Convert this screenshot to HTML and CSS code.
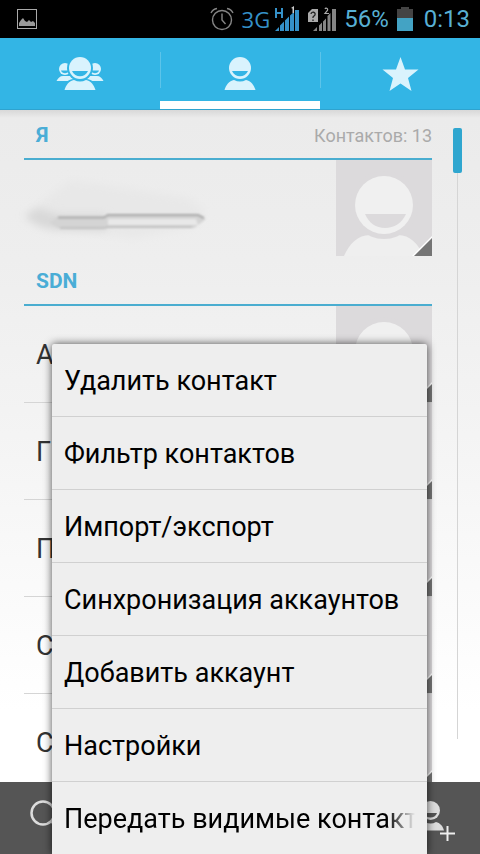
FILE: index.html
```html
<!DOCTYPE html>
<html lang="ru">
<head>
<meta charset="utf-8">
<meta name="viewport" content="width=device-width, initial-scale=1">
<title>Контакты</title>
<link rel="stylesheet" href="styles.css">
</head>
<body>
<svg class="defs" aria-hidden="true">
  <symbol id="avatar" viewBox="0 0 96 96">
    <rect width="96" height="96" fill="#dcdadc"/>
    <path d="M8 96C13 84 22 75 34 75H62C74 75 82 84 88 96Z" fill="#efefef"/>
    <circle cx="48" cy="45" r="34" fill="#dcdadc"/>
    <circle cx="48" cy="45" r="29" fill="#f0f0f0"/>
    <path d="M29 54H70C66 63 58 68 49 68S33 63 29 54Z" fill="#dcdadc"/>
    <path d="M76 96L96 76V96Z" fill="#fff"/>
    <path d="M78 96L96 78V96Z" fill="#757575"/>
  </symbol>
</svg>
<div class="app">
  <header class="status">
    <svg class="status-picture" width="20" height="20" viewBox="0 0 20 20"><rect x=".5" y=".5" width="19" height="19" fill="none" stroke="#aaa"/><path d="M2 17V14L4 11 6 9 8 12 10 13 12 11 14 13 16 12 18 14V17Z" fill="#999"/></svg>
    <svg width="24" height="24" viewBox="0 0 24 24" fill="none" stroke="#858585" stroke-width="1.4"><circle cx="12" cy="13" r="9.5"/><path d="M12 6.500V13L15.500 17M1 6C2 4 4 2 7 1.500M23 6C22 4 20 2 17 1.500"/></svg>
    <span class="network">3G</span>
    <svg class="signal" width="26" height="26" viewBox="0 0 26 26" fill="#3591c8"><path d="M1 25L5 21V25ZM6 19.500L10 15.500V25H6ZM11 14.500L15 10.500V25H11ZM16 9.500L20 6V25H16ZM21 4H25V25H21Z"/><path d="M1 2H3V6H7V2H9V12H7V8H3V12H1Z"/><path d="M17 2L20 0V7H18.500V2.500Z" fill="#ccc"/></svg>
    <svg width="28" height="26" viewBox="0 0 28 26" fill="#858585"><path d="M5 25L9 21V25ZM11 19.500L14 16.500V25H11ZM15 15.500L18 12.500V25H15ZM19.500 10L22.500 7V25H19.500ZM24 3H28V25H24Z"/><path d="M4 3H10V16H0V7Z" fill="#aaa"/><path d="M3 8C3.500 5 8 6 7 9L5 11V12M5 13.500V15" fill="none" stroke="#222" stroke-width="1.300"/><path d="M17 3C18 1 21 3 19 5L17 7.500H21" fill="none" stroke="#aaa" stroke-width="1.200"/></svg>
    <span class="battery-text">56%</span>
    <svg class="battery" width="16" height="24" viewBox="0 0 16 24"><path d="M4 0H12V2H16V11H0V2H4Z" fill="#444"/><path d="M0 11H16V24H0Z" fill="#43a3c4"/></svg>
    <time>0:13</time>
  </header>

  <nav class="tabs" role="tablist">
    <button class="tab" role="tab" aria-label="Группы">
      <svg width="48" height="36" viewBox="0 0 48 36" fill="#d9f3fd"><circle cx="9" cy="13" r="6"/><circle cx="39" cy="13" r="6"/><path d="M.5 25C2 22 4 20 7 20H41C44 20 46 22 47.500 25Z"/><path d="M5 14.500H13C12 18 6 18 5 14.500ZM35 14.500H43C42 18 36 18 35 14.500Z" fill="#33b5e5"/><circle cx="24" cy="12" r="13" fill="#33b5e5"/><path d="M6 35C8 28 11 23 18 23H30C37 23 40 28 42 35Z" fill="#33b5e5"/><path d="M8.500 34C10 29 13 25 18 24Q24 27 30 24C35 25 38 29 39.500 34Z"/><circle cx="24" cy="12" r="11"/><path d="M16 15H32C29 22 19 22 16 15Z" fill="#33b5e5"/></svg>
    </button>
    <button class="tab selected" role="tab" aria-selected="true" aria-label="Контакты">
      <svg width="36" height="36" viewBox="0 0 36 36" fill="#d9f3fd"><path d="M2.500 34C4 29 7 25 12 24Q18 27 24 24C29 25 32 29 33.500 34Z"/><circle cx="18" cy="12" r="11"/><path d="M10 15H26C23 22 13 22 10 15Z" fill="#33b5e5"/></svg>
    </button>
    <button class="tab" role="tab" aria-label="Избранные">
      <svg width="38" height="36" viewBox="0 0 38 36" fill="#d9f3fd"><path d="M19.500 1L24 13.500H37.500L27 22 30.500 35 19.500 27.500 8.500 35 12 22 1.500 13.500H15Z"/></svg>
    </button>
  </nav>

  <main class="content">
    <div class="list">
      <h2 class="section">Я <span class="count">Контактов: 13</span></h2>
      <div class="contact">
        <svg class="smudge" viewBox="0 0 200 96" aria-hidden="true">
          <defs>
            <filter id="soft" x="-20%" y="-60%" width="140%" height="220%"><feGaussianBlur stdDeviation="4"/></filter>
            <filter id="edge" x="-10%" y="-80%" width="120%" height="260%"><feGaussianBlur stdDeviation="1.300"/></filter>
          </defs>
          <path d="M4 54L22 38 46 20 100 28 165 38 182 52 170 66 110 78 50 70Z" fill="#e8e8e8" filter="url(#soft)"/>
          <path d="M0 56L14 48 34 55H82V70H40C24 70 14 68 0 56Z" fill="#d8d8d8" filter="url(#soft)"/>
          <g filter="url(#edge)"><path d="M32 57H80L84 54H172L182 59 170 68H34L26 63Z" fill="#d4d4d4"/><path d="M84 59H172L174 65H84Z" fill="#e8e8e8"/><path d="M34 57.500H80L84 55H174L180 58" fill="none" stroke="#a8a8a8" stroke-width="2"/><path d="M36 68H80L84 67H168" fill="none" stroke="#bbb" stroke-width="1.500"/></g>
        </svg>
        <svg class="avatar"><use href="#avatar"/></svg>
      </div>
      <h2 class="section">SDN</h2>
      <div class="contact divided"><span>А</span><svg class="avatar"><use href="#avatar"/></svg></div>
      <div class="contact divided"><span>Г</span><svg class="avatar"><use href="#avatar"/></svg></div>
      <div class="contact divided"><span>П</span><svg class="avatar"><use href="#avatar"/></svg></div>
      <div class="contact divided"><span>С</span><svg class="avatar"><use href="#avatar"/></svg></div>
      <div class="contact divided"><span>С</span><svg class="avatar"><use href="#avatar"/></svg></div>
    </div>
    <div class="track"><div class="thumb"></div></div>
  </main>

  <footer class="actions">
    <button aria-label="Поиск"><svg width="48" height="72" viewBox="0 0 48 72" fill="none" stroke="#ddd" stroke-width="2.500"><circle cx="19" cy="31" r="11.500"/><path d="M27 39L38 50"/></svg></button>
    <button aria-label="Добавить контакт"><svg width="48" height="72" viewBox="0 0 48 72" fill="#ddd"><path d="M9 48.500C10 44 13 41 17 40Q23 43 28 40C32 41 35 44 36 48.500Z"/><circle cx="22.500" cy="28.500" r="9.500"/><path d="M16 31H29C27 37 18 37 16 31Z" fill="#555"/><path d="M39.500 44V59M32 51.500H47" stroke="#555" stroke-width="5"/><path d="M39.500 44V59M32 51.500H47" stroke="#eee" stroke-width="2"/></svg></button>
  </footer>

  <div class="menu" role="menu">
    <button role="menuitem"><span>Удалить контакт</span></button>
    <button role="menuitem"><span>Фильтр контактов</span></button>
    <button role="menuitem"><span>Импорт/экспорт</span></button>
    <button role="menuitem"><span>Синхронизация аккаунтов</span></button>
    <button role="menuitem"><span>Добавить аккаунт</span></button>
    <button role="menuitem"><span>Настройки</span></button>
    <button role="menuitem"><span class="fade">Передать видимые контакт</span></button>
  </div>
</div>
</body>
</html>
```

FILE: styles.css
```css
* {
  box-sizing: border-box;
}

body {
  margin: 0;
  font-family: Roboto, "Open Sans", sans-serif;
  color: #333;
}

button {
  margin: 0;
  padding: 0;
  border: 0;
  background: none;
  font: inherit;
  color: inherit;
}

svg {
  display: block;
  flex: none;
}

.defs {
  display: none;
}

.app {
  position: relative;
  display: flex;
  flex-direction: column;
  height: 100vh;
  overflow: hidden;
}

/* Status bar */
.status {
  flex: none;
  display: flex;
  align-items: center;
  gap: 8px;
  height: 38px;
  padding: 0 10px 0 17px;
  background: #000;
  color: #58b0d4;
  font-size: 24px;
  line-height: 40px;
}

.status-picture {
  margin-right: auto;
}

.network {
  font-family: "Open Sans", sans-serif;
  font-size: 22px;
  line-height: 36px;
  color: #3591c8;
}

.signal {
  margin-left: -4px;
}

.battery {
  margin-right: 3px;
}

/* Tabs */
.tabs {
  flex: none;
  display: grid;
  grid-template-columns: repeat(3, 1fr);
  height: 72px;
  background: #33b5e5;
  border-bottom: 1px solid #2fa3cf;
}

.tab {
  display: flex;
  justify-content: center;
  align-items: center;
  border-bottom: 8px solid transparent;
  padding-top: 8px;
  background: linear-gradient(#5cc4ea, #5cc4ea) left / 1px 36px no-repeat;
}

.tab:first-child {
  background: none;
}

.tab.selected {
  border-bottom-color: #fff;
}

/* Contact list */
.content {
  flex: 1;
  min-height: 0;
  display: flex;
  overflow: hidden;
  padding-left: 24px;
  background: linear-gradient(#d8d8d8, #ebebeb 8px, #eee 150px, #f3f3f3 300px, #fff 600px);
}

.list {
  flex: 1;
}

.section {
  display: flex;
  justify-content: space-between;
  align-items: center;
  height: 50px;
  margin: 0;
  padding: 2px 0 0 12px;
  border-bottom: 2px solid #4aadd0;
  font-size: 21px;
  font-weight: 700;
  color: #4aadd6;
}

.count {
  font-size: 18px;
  font-weight: 400;
  color: #aaa;
}

.contact {
  display: flex;
  justify-content: space-between;
  align-items: center;
  padding-left: 12px;
  font-size: 27px;
}

.contact span {
  padding-top: 2px;
}

.divided {
  border-bottom: 1px solid #d5d5d5;
}

.avatar {
  width: 96px;
  height: 96px;
}

.smudge {
  width: 200px;
  height: 96px;
  margin-left: -12px;
  overflow: visible;
}

.track {
  width: 9px;
  margin: 18px 18px 43px 21px;
  background: linear-gradient(#d5d5d5, #d5d5d5) center / 1px 100% no-repeat;
}

.thumb {
  height: 45px;
  border-radius: 2px;
  background: #2fa6cf;
}

/* Action bar */
.actions {
  flex: none;
  display: flex;
  justify-content: space-between;
  height: 72px;
  padding: 0 24px;
  background: #555;
}

/* Options menu */
.menu {
  position: absolute;
  right: 53px;
  bottom: 0;
  left: 52px;
  border-radius: 2px 2px 0 0;
  background: #eee;
  box-shadow: 0 0 8px rgba(0, 0, 0, 0.7);
}

.menu button {
  display: block;
  width: 100%;
  padding: 2px 12px 0;
  border-bottom: 1px solid #d0d0d0;
  font-size: 27px;
  line-height: 70px;
  text-align: left;
  color: #000;
}

.menu button:last-child {
  border-bottom: 0;
}

.menu span {
  display: block;
  white-space: nowrap;
}

.fade {
  mask-image: linear-gradient(to left, transparent, #000 28px);
}
```
